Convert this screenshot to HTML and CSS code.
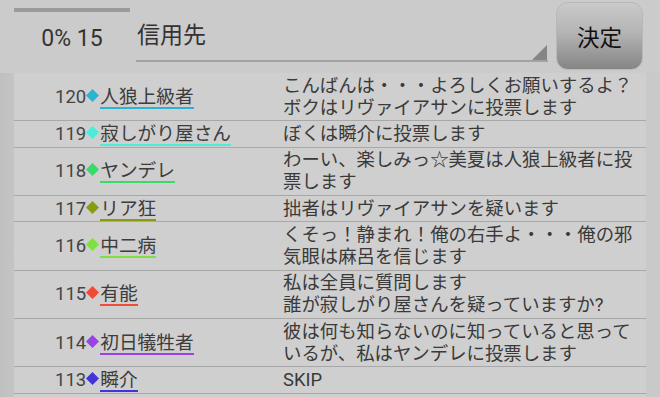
FILE: index.html
```html
<!DOCTYPE html>
<html lang="ja">
<head>
    <meta charset="UTF-8">
    <meta name="viewport" content="width=device-width, initial-scale=1.0">
    <title>信用先</title>
    <link rel="stylesheet" href="styles.css">
</head>
<body>

    <div class="header">
        <div class="status">
            <div class="progress"></div>
            <div class="count">0% 15</div>
        </div>
        <div class="field">信用先</div>
        <button class="decide">決定</button>
    </div>

    <div class="log">
        <div class="row">
            <div class="who"><span class="tag"><span class="num">120</span><svg class="mark" width="13" height="13" viewBox="0 0 12 12"><polygon points="6,0 12,6 6,12 0,6" fill="#2ab4d4"/></svg><span class="name" style="border-color:#2ab4d4">人狼上級者</span></span></div>
            <div class="msg">こんばんは・・・よろしくお願いするよ？<br>ボクはリヴァイアサンに投票します</div>
        </div>
        <div class="row">
            <div class="who"><span class="tag"><span class="num">119</span><svg class="mark" width="13" height="13" viewBox="0 0 12 12"><polygon points="6,0 12,6 6,12 0,6" fill="#4eecd6"/></svg><span class="name" style="border-color:#4eecd6">寂しがり屋さん</span></span></div>
            <div class="msg">ぼくは瞬介に投票します</div>
        </div>
        <div class="row">
            <div class="who"><span class="tag"><span class="num">118</span><svg class="mark" width="13" height="13" viewBox="0 0 12 12"><polygon points="6,0 12,6 6,12 0,6" fill="#36dc68"/></svg><span class="name" style="border-color:#36dc68">ヤンデレ</span></span></div>
            <div class="msg">わーい、楽しみっ☆美夏は人狼上級者に投<br>票します</div>
        </div>
        <div class="row">
            <div class="who"><span class="tag"><span class="num">117</span><svg class="mark" width="13" height="13" viewBox="0 0 12 12"><polygon points="6,0 12,6 6,12 0,6" fill="#8a9c0a"/></svg><span class="name" style="border-color:#8a9c0a">リア狂</span></span></div>
            <div class="msg">拙者はリヴァイアサンを疑います</div>
        </div>
        <div class="row">
            <div class="who"><span class="tag"><span class="num">116</span><svg class="mark" width="13" height="13" viewBox="0 0 12 12"><polygon points="6,0 12,6 6,12 0,6" fill="#80e040"/></svg><span class="name" style="border-color:#80e040">中二病</span></span></div>
            <div class="msg">くそっ！静まれ！俺の右手よ・・・俺の邪<br>気眼は麻呂を信じます</div>
        </div>
        <div class="row">
            <div class="who"><span class="tag"><span class="num">115</span><svg class="mark" width="13" height="13" viewBox="0 0 12 12"><polygon points="6,0 12,6 6,12 0,6" fill="#f04a38"/></svg><span class="name" style="border-color:#f04a38">有能</span></span></div>
            <div class="msg">私は全員に質問します<br>誰が寂しがり屋さんを疑っていますか?</div>
        </div>
        <div class="row">
            <div class="who"><span class="tag"><span class="num">114</span><svg class="mark" width="13" height="13" viewBox="0 0 12 12"><polygon points="6,0 12,6 6,12 0,6" fill="#9c40e8"/></svg><span class="name" style="border-color:#9c40e8">初日犠牲者</span></span></div>
            <div class="msg">彼は何も知らないのに知っていると思って<br>いるが、私はヤンデレに投票します</div>
        </div>
        <div class="row">
            <div class="who"><span class="tag"><span class="num">113</span><svg class="mark" width="13" height="13" viewBox="0 0 12 12"><polygon points="6,0 12,6 6,12 0,6" fill="#4433d8"/></svg><span class="name" style="border-color:#4433d8">瞬介</span></span></div>
            <div class="msg">SKIP</div>
        </div>
        <div class="row empty"></div>
    </div>

</body>
</html>
```

FILE: styles.css
```css
body {
    margin: 0;
    height: 397px;
    overflow: hidden;
    background-color: #c9c9c9;
    font-family: Roboto, "Noto Sans CJK JP", sans-serif;
    color: #3c3c3c;
}

.header {
    display: flex;
    height: 73px;
    padding-left: 14px;
    background-color: #cbcbcb;
}

.status {
    width: 116px;
}

.progress {
    margin-top: 8px;
    height: 4px;
    background-color: #9a9a9a;
}

.count {
    margin-top: 13px;
    text-align: center;
    font-size: 23px;
    line-height: 28px;
    color: #333;
}

.field {
    position: relative;
    flex: 1;
    margin: 0 8px 0 6px;
    height: 42px;
    padding: 18px 0 0 1px;
    border-bottom: 2px solid #a2a2a2;
    font-family: "Noto Sans CJK JP", sans-serif;
    font-size: 23px;
    line-height: 30px;
    color: #333;
}

.field::after {
    content: "";
    position: absolute;
    right: 1px;
    bottom: 0;
    border-left: 15px solid transparent;
    border-bottom: 15px solid #858585;
}

.decide {
    width: 87px;
    height: 68px;
    margin: 2px 17px 0 0;
    border: 1px solid #b8b8b8;
    border-radius: 12px;
    background: linear-gradient(to bottom, #cacaca 0%, #b4b4b4 45%, #858585 100%);
    font-family: "Noto Sans CJK JP", sans-serif;
    font-size: 22.5px;
    color: #111;
    padding: 0;
}

.log {
    margin-right: 14px;
    padding-left: 14px;
    background: linear-gradient(to right, #c0c0c0 0, #c4c4c4 14px, #cfcfcf 14px);
}

.row {
    display: grid;
    grid-template-columns: 269px 1fr;
    background-color: #cfcfcf;
    border-bottom: 1px solid #a8a8a8;
}

.row.empty {
    height: 30px;
    border-bottom: none;
}

.who {
    display: flex;
    align-items: center;
    padding-left: 41px;
}

.tag {
    line-height: 20px;
    white-space: nowrap;
}

.num {
    font-size: 18.5px;
    color: #444;
}

.mark {
    margin: 0 1px 0 0;
    vertical-align: 1px;
}

.name {
    display: inline-block;
    font-family: "Noto Sans CJK JP", sans-serif;
    font-size: 18.7px;
    line-height: 20px;
    padding-bottom: 2px;
    border-bottom: 2px solid;
    color: #3c3c3c;
}

.msg {
    padding: 1.5px 0;
    font-size: 18.4px;
    line-height: 22.2px;
    color: #3a3a3a;
}
```
